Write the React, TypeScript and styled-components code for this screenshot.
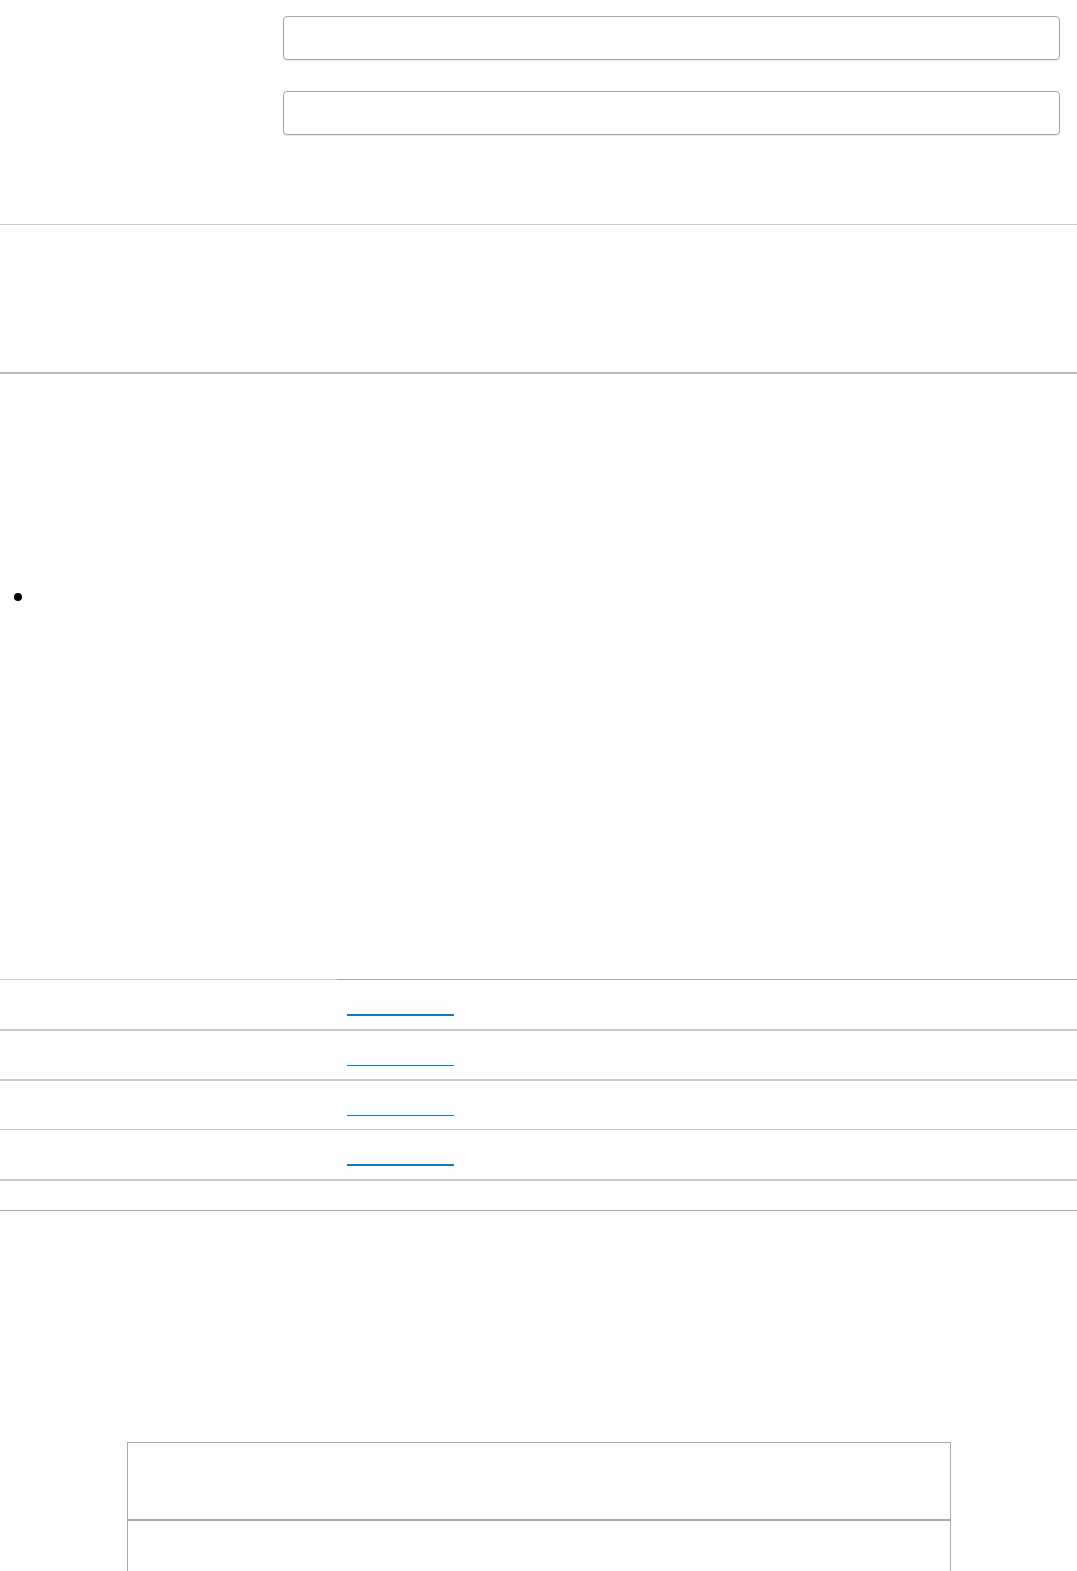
import React from 'react';
import styled, { createGlobalStyle } from 'styled-components';

const GlobalStyle = createGlobalStyle`
  html, body {
    margin: 0;
    padding: 0;
    background: #fefefe;
    font-family: "Liberation Sans", Arial, sans-serif;
    font-size: 16px;
    color: #222;
  }
`;

const Page = styled.div`
  width: 1077px;
  height: 1571px;
  overflow: hidden;
`;

const FormBlock = styled.div`
  display: grid;
  grid-template-columns: 283px 777px;
  align-content: start;
  row-gap: 31px;
  padding-top: 16px;
  height: 224px;
  box-sizing: border-box;
`;

const Label = styled.div``;

const Field = styled.div`
  height: 44px;
  box-sizing: border-box;
  border: 1px solid #9ea6ae;
  border-radius: 4px;
  background: #fff;
  box-shadow: 0 1px 1px rgba(0, 0, 0, 0.08);
`;

const Section = styled.div<{ $h: number; $border: string; $width: number }>`
  height: ${p => p.$h}px;
  border-top: ${p => p.$width}px solid ${p => p.$border};
`;

const List = styled.ul`
  margin: 0;
  padding: 212px 0 0 37px;
  height: 607px;
  box-sizing: border-box;
  border-top: 2px solid #bbbbbb;
`;

const Item = styled.li`
  line-height: 20px;
  font-size: 26px;
  color: #000;
`;

const Table = styled.div`
  display: grid;
  grid-template-columns: 337px 1fr;
`;

const Cell = styled.div<{ $border: string; $w?: number; $h?: number }>`
  height: ${p => p.$h ?? 50}px;
  box-sizing: border-box;
  border-top: ${p => p.$w ?? 1}px solid ${p => p.$border};
`;

const LinkLine = styled.span<{ $thick: number }>`
  display: block;
  margin: 34px 0 0 10px;
  width: 107px;
  border-bottom: ${p => p.$thick}px solid #0a7bc4;
`;

const TableEnd = styled.div`
  border-top: 1px solid #a8a8a8;
  height: 231px;
`;

const Box = styled.div`
  margin-left: 127px;
  width: 822px;
  border: 1px solid #a9a9a9;
  border-bottom: none;
`;

const BoxHead = styled.div`
  height: 76px;
  border-bottom: 2px solid #a9a9a9;
`;

const BoxBody = styled.div`
  height: 120px;
`;

const rows = [
  { thick: 2, border: '#c8ccd0', w: 2 },
  { thick: 1, border: '#c8ccd0', w: 2 },
  { thick: 1, border: '#c8c8c8', w: 1 },
  { thick: 2, border: '#c8ccd0', w: 2 },
];

export default function App() {
  return (
    <Page>
      <GlobalStyle />
      <FormBlock>
        <Label />
        <Field />
        <Label />
        <Field />
      </FormBlock>
      <Section $h={147} $border="#cccccc" $width={1} />
      <List>
        <Item>&nbsp;</Item>
      </List>
      <Table>
        <Cell $border="#cccccc" />
        <Cell $border="#aaaaaa">
          <LinkLine $thick={rows[0].thick} />
        </Cell>
        {rows.slice(1).map((r, i) => (
          <React.Fragment key={i}>
            <Cell $border={rows[i].border} $w={rows[i].w} />
            <Cell $border={rows[i].border} $w={rows[i].w}>
              <LinkLine $thick={r.thick} />
            </Cell>
          </React.Fragment>
        ))}
        <Cell $border="#c8ccd0" $w={2} $h={31} />
        <Cell $border="#c8ccd0" $w={2} $h={31} />
      </Table>
      <TableEnd />
      <Box>
        <BoxHead />
        <BoxBody />
      </Box>
    </Page>
  );
}
